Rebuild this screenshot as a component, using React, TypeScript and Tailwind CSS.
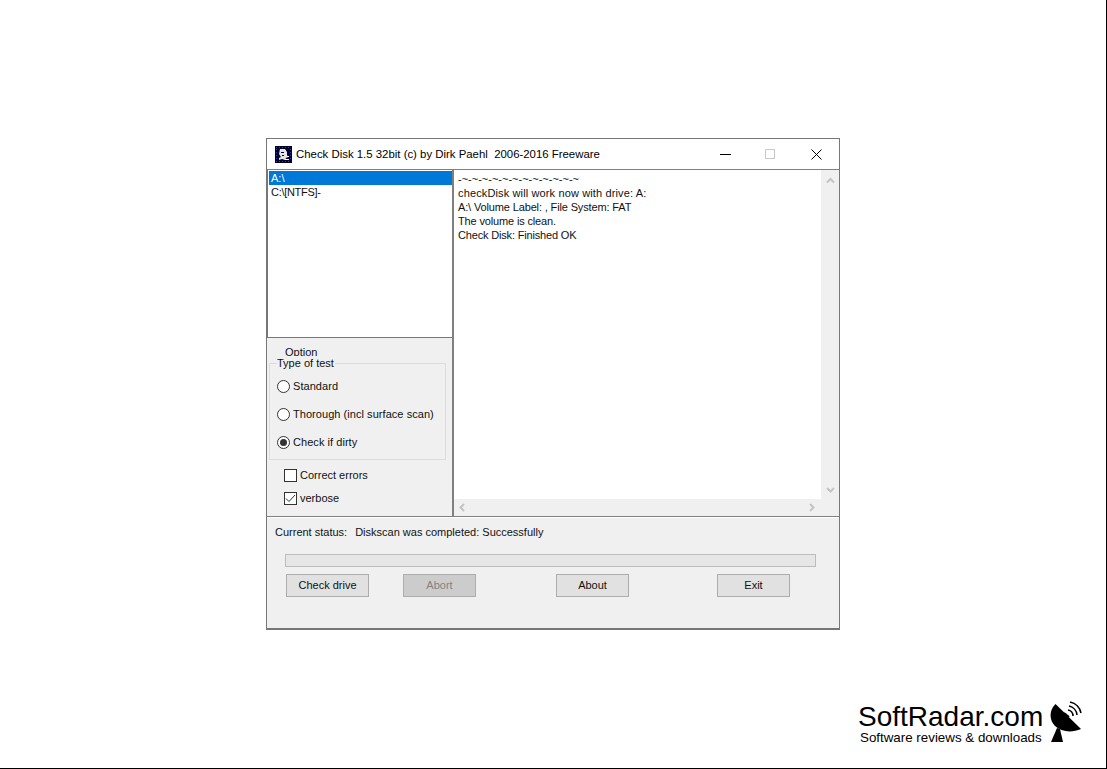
import React from 'react';

const ui = { fontFamily: '"Liberation Sans", Arial, sans-serif' };

const Radio = ({ label, checked }: { label: string; checked?: boolean }) => (
    <div className="flex items-center h-[14px]">
        <span className="w-[13px] h-[13px] rounded-full border border-[#333] bg-white flex items-center justify-center shrink-0">
            {checked && <span className="w-[7px] h-[7px] rounded-full bg-[#333]" />}
        </span>
        <span className="ml-[3px] whitespace-nowrap tracking-[0.05px]">{label}</span>
    </div>
);

const Check = ({ label, checked }: { label: string; checked?: boolean }) => (
    <div className="flex items-center h-[14px]">
        <span className="w-[13px] h-[13px] border border-[#333] bg-white shrink-0 flex items-center justify-center">
            {checked && (
                <svg width="11" height="11" viewBox="0 0 11 11" fill="none" stroke="#333" strokeWidth="1">
                    <path d="M1 5.5 L4 8.5 L10 2" />
                </svg>
            )}
        </span>
        <span className="ml-[3px]">{label}</span>
    </div>
);

const Btn = ({ label, w, disabled }: { label: string; w: string; disabled?: boolean }) => (
    <div
        className={`${w} h-[23px] pb-[1px] border border-[#adadad] flex items-center justify-center ${
            disabled ? 'bg-[#cccccc] text-[#838383]' : 'bg-[#e1e1e1] text-[#111]'
        }`}
    >
        {label}
    </div>
);

const Chevron = ({ d }: { d: string }) => (
    <svg width="9" height="9" viewBox="0 0 9 9" fill="none" stroke="#c4c4c4" strokeWidth="2">
        <path d={d} />
    </svg>
);

export default function App() {
    return (
        <div
            className="w-[1107px] h-[769px] bg-white border-r border-b border-black overflow-hidden relative text-[11px] leading-[14px] text-[#111]"
            style={ui}
        >
            <div className="ml-[266px] mt-[138px] w-[574px] h-[492px] border border-[#777] border-b-2 flex flex-col bg-[#f0f0f0]">
                {/* title bar */}
                <div className="h-[30px] bg-white flex items-center shrink-0">
                    <svg className="ml-[8px]" width="17" height="17" viewBox="0 0 17 17">
                        <rect width="17" height="17" fill="#00002a" />
                        <path d="M1 1.5H16M1 15.5H16M1.5 3V14M15.5 3V14" stroke="#2a3ccc" strokeWidth="1" strokeDasharray="1 2" />
                        <path d="M5 3h5l2 3v3l1 2-2 1-1 2-3-1-3 1v-2l2-1-2-3z" fill="#e6e6e6" />
                        <path d="M6 6h3v1H6zM7 9h2v1H7z" fill="#00002a" />
                        <path d="M10 13h4v1h-4zM12 10h2v1h-2z" fill="#ffffff" />
                    </svg>
                    <span className="ml-[4px] text-[11.4px] whitespace-pre text-black">Check Disk 1.5 32bit (c) by Dirk Paehl  2006-2016 Freeware</span>
                    <div className="ml-auto flex items-center h-full">
                        <svg className="mr-[34px]" width="11" height="11" viewBox="0 0 11 11">
                            <path d="M0 5.5h11" stroke="#000" strokeWidth="1" />
                        </svg>
                        <svg className="mr-[35px]" width="11" height="11" viewBox="0 0 11 11" fill="none">
                            <rect x="0.5" y="0.5" width="9" height="9" stroke="#c8c8c8" />
                        </svg>
                        <svg className="mr-[17px]" width="11" height="11" viewBox="0 0 11 11" fill="none" stroke="#000" strokeWidth="1">
                            <path d="M0.5 0.5L10.5 10.5M10.5 0.5L0.5 10.5" />
                        </svg>
                    </div>
                </div>

                {/* main split */}
                <div className="h-[348px] shrink-0 flex border-t border-b border-[#808080]">
                    {/* left column */}
                    <div className="w-[185px] shrink-0 flex flex-col">
                        <div className="h-[168px] bg-white border-l border-b border-[#777] pl-[1px] pt-[1px] shrink-0">
                            <div className="h-[14px] bg-[#0078d7] text-white pl-[2px] flex items-center">A:\</div>
                            <div className="h-[14px] pl-[2px] flex items-center tracking-[-0.3px]">C:\[NTFS]-</div>
                        </div>
                        <div className="flex-1 pl-[2px] pr-[6px] pt-[7px] relative">
                            <div className="ml-[16px] h-[14px]">Option</div>
                            <div className="relative h-[97px] border border-[#dcdcdc] mt-[4px] pl-[7px] pt-[15px] flex flex-col gap-[14px]">
                                <span className="absolute left-[7px] top-[-8px] bg-[#f0f0f0] pr-[1px]">Type of test</span>
                                <Radio label="Standard" />
                                <Radio label="Thorough (incl surface scan)" />
                                <Radio label="Check if dirty" checked />
                            </div>
                            <div className="ml-[15px] mt-[8px] flex flex-col gap-[9px]">
                                <Check label="Correct errors" />
                                <Check label="verbose" checked />
                            </div>
                        </div>
                    </div>

                    {/* log pane */}
                    <div className="flex-1 flex flex-col border-l-2 border-[#808080] min-w-0">
                        <div className="flex-1 flex min-h-0">
                            <div className="flex-1 bg-white pl-[4px] pt-[2px]">
                                <div>-~-~-~-~-~-~-~-~-~-~-~-~</div>
                                <div className="tracking-[0.13px]">checkDisk will work now with drive: A:</div>
                                <div className="tracking-[-0.14px]">A:\ Volume Label: , File System: FAT</div>
                                <div className="tracking-[-0.15px]">The volume is clean.</div>
                                <div className="tracking-[-0.17px]">Check Disk: Finished OK</div>
                            </div>
                            <div className="w-[18px] shrink-0 flex flex-col items-center justify-between pt-[6px] pb-[5px]">
                                <Chevron d="M1 6.5L4.5 3L8 6.5" />
                                <Chevron d="M1 3L4.5 6.5L8 3" />
                            </div>
                        </div>
                        <div className="h-[17px] shrink-0 flex items-center justify-between pl-[4px] pr-[23px]">
                            <Chevron d="M6 1L2.5 4.5L6 8" />
                            <Chevron d="M3 1L6.5 4.5L3 8" />
                        </div>
                    </div>
                </div>

                {/* status panel */}
                <div className="flex-1 border-t border-white">
                    <div className="ml-[8px] mt-[7px] flex">
                        <span>Current status:</span>
                        <span className="ml-[8px]">Diskscan was completed: Successfully</span>
                    </div>
                    <div className="ml-[18px] mt-[15px] w-[531px] h-[13px] bg-[#e6e6e6] border border-[#bcbcbc]" />
                    <div className="ml-[19px] mt-[7px] flex">
                        <Btn label="Check drive" w="w-[83px]" />
                        <div className="ml-[34px]"><Btn label="Abort" w="w-[73px]" disabled /></div>
                        <div className="ml-[80px]"><Btn label="About" w="w-[73px]" /></div>
                        <div className="ml-[88px]"><Btn label="Exit" w="w-[73px]" /></div>
                    </div>
                </div>
            </div>

            {/* watermark */}
            <div className="absolute left-[858px] top-[702px] text-black">
                <div className="text-[28px] leading-[30px]">SoftRadar.com</div>
                <div className="text-[13.35px] leading-[14px] -mt-[1px] ml-[2px] whitespace-nowrap">Software reviews &amp; downloads</div>
            </div>
            <svg className="absolute left-[1044px] top-[696px]" width="46" height="52" viewBox="0 0 46 52">
                <path d="M11.5 8 C5 14 5 24 11 30 C17 36 28 37 37 33 Z" fill="#000" />
                <path d="M13 32 L7 46 H19 L16 33 Z" fill="#000" />
                <path d="M20 17 L25 21" stroke="#000" strokeWidth="2" />
                <g fill="none" stroke="#000" strokeWidth="1.6">
                    <path d="M24 14 A6 6 0 0 1 29 20" />
                    <path d="M25 10 A10 10 0 0 1 33 19" />
                    <path d="M26 6 A14 14 0 0 1 37 17" />
                </g>
            </svg>
        </div>
    );
}
